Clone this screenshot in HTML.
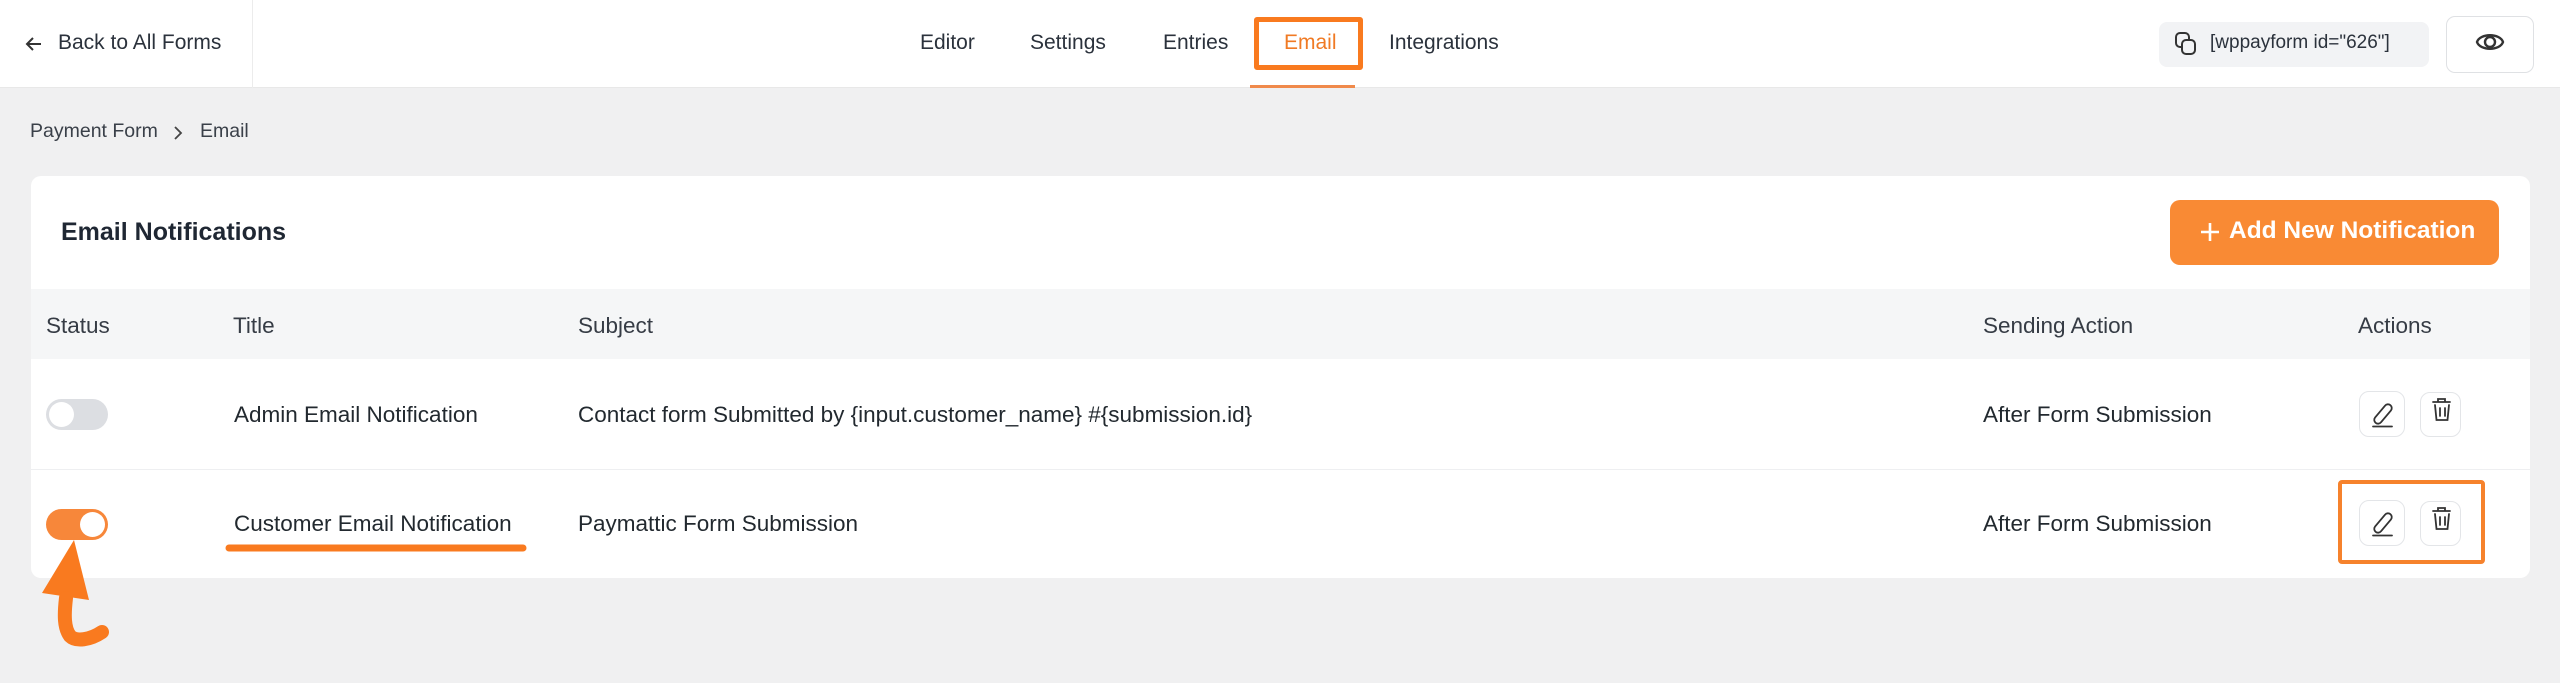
<!DOCTYPE html>
<html><head><meta charset="utf-8"><style>
*{box-sizing:border-box;margin:0;padding:0}
body{width:2560px;height:683px;background:#f0f0f1;font-family:"Liberation Sans",sans-serif;color:#1f2733;position:relative;overflow:hidden}
.abs{position:absolute;white-space:nowrap}
.hdr{position:absolute;left:0;top:0;width:2560px;height:88px;background:#fff;border-bottom:1px solid #e8e8e8}
.nav{font-size:21px;color:#2b323c;top:31px}
.card{position:absolute;left:31px;top:176px;width:2499px;height:402px;background:#fff;border-radius:10px;overflow:hidden}
.th{position:absolute;left:0;top:113px;width:100%;height:70px;background:#f5f6f7}
.t{font-size:22.5px;color:#22292f}
.btn{position:absolute;width:46px;height:46px;border:1px solid #e3e5e8;border-radius:10px;background:#fff}
</style></head><body>
<div class="hdr"></div>
<div class="abs" style="left:252px;top:0;width:1px;height:88px;background:#ececec"></div>
<svg class="abs" style="left:24px;top:34px" width="20" height="20" viewBox="0 0 20 20"><path d="M17 10H3M9 4L3 10l6 6" stroke="#333" stroke-width="2" fill="none"/></svg>
<div class="abs nav" style="left:58px">Back to All Forms</div>
<div class="abs nav" style="left:920px">Editor</div>
<div class="abs nav" style="left:1030px">Settings</div>
<div class="abs nav" style="left:1163px">Entries</div>
<div class="abs" style="left:1254px;top:17px;width:109px;height:53px;border:5px solid #f97a1f;border-radius:3px"></div>
<div class="abs nav" style="left:1284px;color:#f07a24">Email</div>
<div class="abs" style="left:1250px;top:85px;width:105px;height:3px;background:#f08a4b"></div>
<div class="abs nav" style="left:1389px">Integrations</div>
<div class="abs" style="left:2159px;top:22px;width:270px;height:45px;background:#f2f3f5;border-radius:8px"></div>
<svg class="abs" style="left:2175px;top:32px" width="22" height="24" viewBox="0 0 22 24"><rect x="1" y="1" width="13" height="14" rx="4" stroke="#333" stroke-width="2" fill="none"/><rect x="7" y="8" width="13" height="14" rx="4" stroke="#333" stroke-width="2" fill="#f2f3f5"/></svg>
<div class="abs" style="left:2210px;top:32px;font-size:19px;color:#2b323c">[wppayform id="626"]</div>
<div class="abs" style="left:2446px;top:16px;width:88px;height:57px;border:1px solid #dfe1e4;border-radius:9px;background:#fff"></div>
<svg class="abs" style="left:2474px;top:28px" width="32" height="28" viewBox="0 0 32 28"><path d="M3 14C6 5 26 5 29 14C26 23 6 23 3 14Z" stroke="#333" stroke-width="2.4" fill="none"/><circle cx="16" cy="14" r="5" stroke="#333" stroke-width="2.4" fill="none"/></svg>
<div class="abs" style="left:30px;top:120px;font-size:19.5px;color:#3a4049">Payment Form</div>
<svg class="abs" style="left:172px;top:123px" width="12" height="20" viewBox="0 0 12 20"><path d="M3 4l6 6-6 6" stroke="#444" stroke-width="1.8" fill="none"/></svg>
<div class="abs" style="left:200px;top:120px;font-size:19.5px;color:#3a4049">Email</div>
<div class="card">
<div class="abs" style="left:30px;top:42px;font-size:25px;font-weight:bold;color:#1f2733">Email Notifications</div>
<div class="abs" style="left:2139px;top:24px;width:329px;height:65px;background:#f98a34;border-radius:10px"></div>
<svg class="abs" style="left:2168px;top:45px" width="22" height="22" viewBox="0 0 22 22"><path d="M11 2v18M2 11h18" stroke="#fff" stroke-width="2.6"/></svg>
<div class="abs" style="left:2198px;top:41px;font-size:24.5px;font-weight:bold;color:#fff">Add New Notification</div>
<div class="th"></div>
<div class="abs t" style="left:15px;top:137px;color:#363c45">Status</div>
<div class="abs t" style="left:202px;top:137px;color:#363c45">Title</div>
<div class="abs t" style="left:547px;top:137px;color:#363c45">Subject</div>
<div class="abs t" style="left:1952px;top:137px;color:#363c45">Sending Action</div>
<div class="abs t" style="left:2327px;top:137px;color:#363c45">Actions</div>
<div class="abs" style="left:0;top:293px;width:100%;height:1px;background:#eeeff1"></div>
<div class="abs" style="left:15px;top:223px;width:62px;height:31px;border-radius:16px;background:#dcdee2"></div>
<div class="abs" style="left:18px;top:226px;width:25px;height:25px;border-radius:50%;background:#fff"></div>
<div class="abs t" style="left:203px;top:226px">Admin Email Notification</div>
<div class="abs t" style="left:547px;top:226px">Contact form Submitted by {input.customer_name} #{submission.id}</div>
<div class="abs t" style="left:1952px;top:226px">After Form Submission</div>
<div class="abs t" style="left:203px;top:335px">Customer Email Notification</div>
<div class="abs t" style="left:547px;top:335px">Paymattic Form Submission</div>
<div class="abs t" style="left:1952px;top:335px">After Form Submission</div>
<div class="abs" style="left:15px;top:333px;width:62px;height:31px;border-radius:16px;background:#f7873a"></div>
<div class="abs" style="left:49px;top:336px;width:25px;height:25px;border-radius:50%;background:#fff"></div>
<div class="btn" style="left:2328px;top:215px"></div><div class="btn" style="left:2389px;top:216px;width:41px;height:45px"></div>
<div class="btn" style="left:2328px;top:324px"></div><div class="btn" style="left:2389px;top:325px;width:41px;height:45px"></div>
</div>
<svg class="abs" style="left:0;top:0" width="2560" height="683" viewBox="0 0 2560 683">
<g stroke="#333" stroke-width="1.8" fill="none" stroke-linecap="round">
<g id="ic">
<rect x="-3.8" y="-11.5" width="7.6" height="23" rx="3.8" transform="translate(2383,414) rotate(40)"/>
<path d="M2373 426.5h19"/>
<path d="M2433 402h17M2438 402v-3h7v3M2435 405l1.5 15h11l1.5-15M2440 408v8M2445 408v8"/>
</g>
<g transform="translate(0,109)">
<rect x="-3.8" y="-11.5" width="7.6" height="23" rx="3.8" transform="translate(2383,414) rotate(40)"/>
<path d="M2373 426.5h19"/>
<path d="M2433 402h17M2438 402v-3h7v3M2435 405l1.5 15h11l1.5-15M2440 408v8M2445 408v8"/>
</g>
</g>
<rect x="2340" y="482" width="143" height="80" fill="none" stroke="#f6822c" stroke-width="4" rx="2"/>
<line x1="229" y1="548" x2="523" y2="548" stroke="#f97a1f" stroke-width="7" stroke-linecap="round"/>
<path d="M74 540L42 593L89 600Z" fill="#f97a1f"/>
<path d="M66 598C64 615 64 628 70 636C76 642 90 640 102 632" stroke="#f97a1f" stroke-width="14" fill="none" stroke-linecap="round"/>
</svg>
</body></html>
